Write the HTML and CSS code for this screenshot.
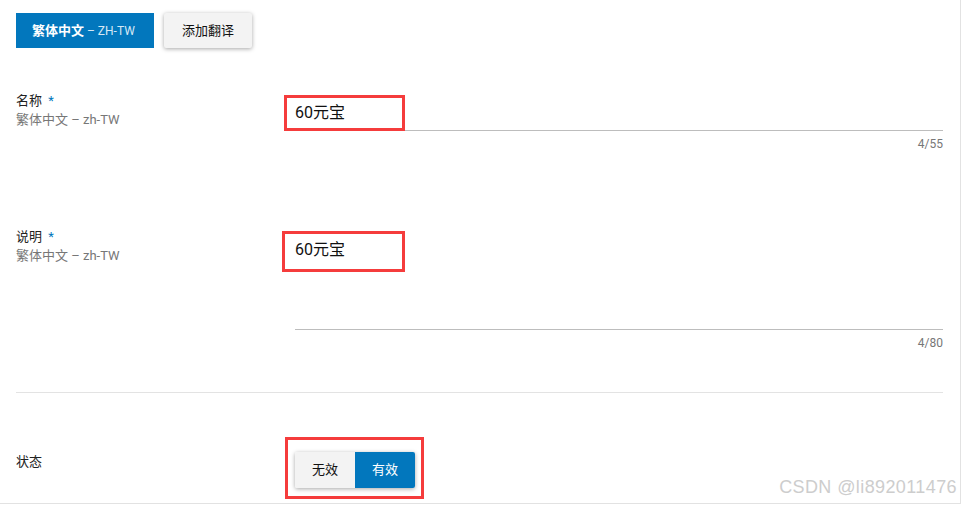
FILE: index.html
```html
<!DOCTYPE html>
<html lang="zh">
<head>
<meta charset="utf-8">
<link rel="stylesheet" href="styles.css">
</head>
<body>
<div class="page">
  <div class="tabs">
    <button class="btn btn-primary"><b>繁体中文</b><span class="code"> – ZH-TW</span></button>
    <button class="btn btn-raised">添加翻译</button>
  </div>

  <div class="row row-name">
    <div class="label">
      <div class="label-main">名称 <span class="star">*</span></div>
      <div class="label-sub">繁体中文 – zh-TW</div>
    </div>
    <div class="field">
      <div class="field-input">60元宝</div>
      <div class="counter">4/55</div>
      <div class="mark mark-name"></div>
    </div>
  </div>

  <div class="row row-desc">
    <div class="label">
      <div class="label-main">说明 <span class="star">*</span></div>
      <div class="label-sub">繁体中文 – zh-TW</div>
    </div>
    <div class="field">
      <div class="field-input field-area">60元宝</div>
      <div class="counter">4/80</div>
      <div class="mark mark-desc"></div>
    </div>
  </div>

  <div class="divider"></div>

  <div class="row row-status">
    <div class="label">
      <div class="label-main">状态</div>
    </div>
    <div class="field">
      <div class="toggle">
        <span class="opt">无效</span>
        <span class="opt opt-on">有效</span>
      </div>
      <div class="mark mark-status"></div>
    </div>
  </div>

  <div class="watermark">CSDN @li892011476</div>
</div>
</body>
</html>
```

FILE: styles.css
```css
* { box-sizing: border-box; }
html, body { margin: 0; padding: 0; background: #fff; }
body {
  font-family: Roboto, "Noto Sans CJK SC", sans-serif;
  color: #222;
  font-size: 13px;
}
.page {
  position: relative;
  width: 961px;
  height: 504px;
  padding: 13px 17px 0 16px;
  border-right: 1px solid #e2e2e2;
  border-bottom: 1px solid #e2e2e2;
  overflow: hidden;
}
.tabs { display: flex; gap: 10px; }
.btn {
  height: 35px;
  border: 0;
  border-radius: 2px;
  padding: 0 16px;
  font-family: Roboto, "Noto Sans CJK SC", sans-serif;
  font-size: 13px;
  font-weight: 400;
  line-height: 35px;
  cursor: pointer;
}
.btn-primary {
  width: 138px;
  background: #0277bd;
  color: #fff;
  border-radius: 0;
  text-align: left;
}
.btn-primary b { font-weight: 700; }
.btn-primary .code { font-size: 12px; color: #d6e8f5; font-weight: 400; }
.btn-raised {
  width: 88px;
  background: #f3f3f3;
  color: #111;
  box-shadow: 0 1px 4px rgba(0,0,0,0.35);
}
.row {
  display: grid;
  grid-template-columns: 279px 1fr;
}
.row-name { margin-top: 43px; }
.row-desc { margin-top: 76px; }
.row-status { margin-top: 59px; }
.label { line-height: 19px; }
.label-main { color: #222; font-size: 13px; }
.star { color: #0277bd; margin-left: 3px; }
.label-sub { color: #777; font-size: 13px; }
.field { position: relative; }
.field-input {
  padding-top: 12px;
  padding-bottom: 7px;
  font-size: 16px;
  line-height: 20px;
  color: #111;
  border-bottom: 1px solid #bdbdbd;
}
.field-area { padding-top: 13px; padding-bottom: 69px; }
.counter {
  margin-top: 6px;
  text-align: right;
  font-size: 12px;
  line-height: 14px;
  color: #777;
}
.divider {
  margin-top: 42px;
  height: 1px;
  background: #e3e3e3;
}
.toggle {
  display: inline-flex;
  height: 36px;
  border-radius: 2px;
  overflow: hidden;
  box-shadow: 0 1px 4px rgba(0,0,0,0.35);
}
.opt {
  width: 60px;
  line-height: 36px;
  text-align: center;
  font-size: 13px;
  background: #f3f3f3;
  color: #111;
}
.opt-on { background: #0277bd; color: #fff; }
.mark {
  position: absolute;
  border: 3px solid #f53c3c;
  pointer-events: none;
}
.mark-name { left: -11px; top: 4px; width: 121px; height: 36px; }
.mark-desc { left: -13px; top: 4px; width: 123px; height: 41px; }
.mark-status { left: -10px; top: -15px; width: 139px; height: 62px; }
.watermark {
  position: absolute;
  right: 3px;
  bottom: 5px;
  font-family: "Liberation Sans", Arial, sans-serif;
  font-size: 18px;
  letter-spacing: 0.4px;
  color: #cdcdcd;
}
```
